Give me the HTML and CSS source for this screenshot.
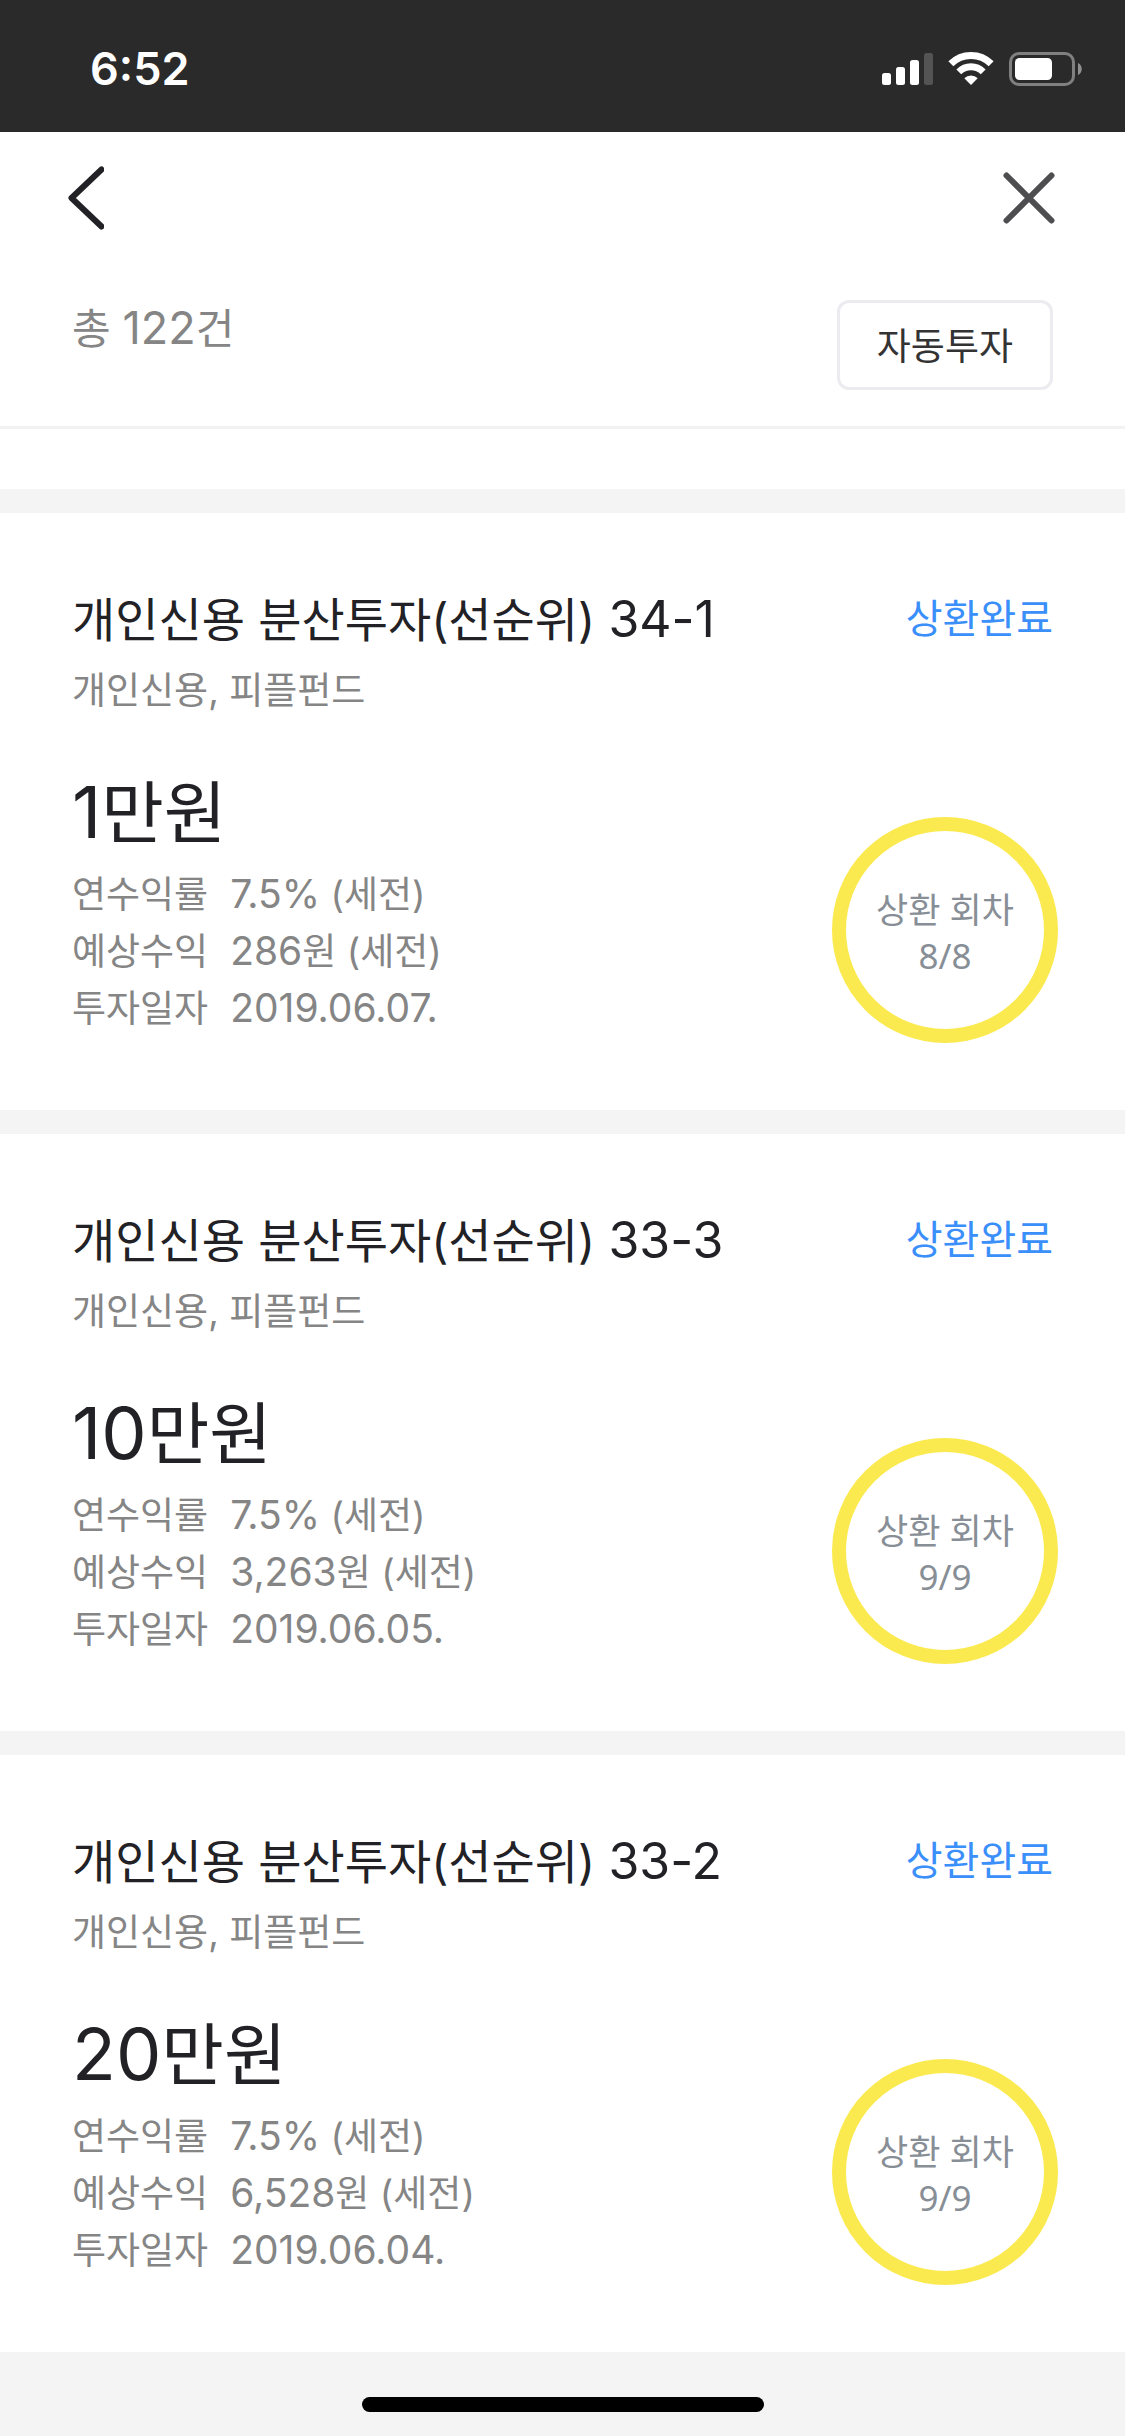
FILE: index.html
```html
<!DOCTYPE html>
<html lang="ko">
<head>
<meta charset="utf-8">
<meta name="viewport" content="width=device-width, initial-scale=1">
<title>투자 내역</title>
<link rel="stylesheet" href="styles.css">
</head>
<body>
<div class="status-bar">
  <span class="clock">6:52</span>
  <div class="indicators">
    <svg width="51" height="34" viewBox="0 0 51 34" aria-hidden="true">
      <g fill="#fff"><rect x="0" y="21" width="9" height="12" rx="2.5"/><rect x="14" y="15" width="9" height="18" rx="2.5"/><rect x="28" y="8" width="9" height="25" rx="2.5"/></g>
      <rect x="42" y="1" width="9" height="32" rx="2.5" fill="#545454"/>
    </svg>
    <svg width="46" height="34" viewBox="0 0 46 34" aria-hidden="true">
      <g fill="none" stroke="#fff"><path stroke-width="7" d="M2.85 11.85A28.5 28.5 0 0 1 43.15 11.85"/><path stroke-width="6.8" d="M10.8 19.8A17.3 17.3 0 0 1 35.2 19.8"/></g>
      <path fill="#fff" d="M16.3 26.3A9.5 9.5 0 0 1 29.7 26.3L23 33Z"/>
    </svg>
    <svg width="73" height="34" viewBox="0 0 73 34" aria-hidden="true">
      <rect x="1.5" y="1.5" width="63" height="31" rx="8.5" fill="none" stroke="#808080" stroke-width="3"/>
      <rect x="6" y="6" width="37" height="22" rx="4.5" fill="#fff"/>
      <path fill="#909090" d="M69 11C74 13 74 21 69 23Z"/>
    </svg>
  </div>
</div>

<nav class="nav">
  <button class="icon-button" type="button" aria-label="뒤로">
    <svg width="36" height="64" viewBox="0 0 36 64" fill="none" stroke="#222226" stroke-width="6" stroke-linecap="round" stroke-linejoin="round"><path d="M33.5 3.5L3.5 32L33.5 60.5"/></svg>
  </button>
  <button class="icon-button" type="button" aria-label="닫기">
    <svg width="52" height="52" viewBox="0 0 52 52" fill="none" stroke="#4e4e50" stroke-width="6" stroke-linecap="round"><path d="M3.5 3.5L48.5 48.5M48.5 3.5L3.5 48.5"/></svg>
  </button>
</nav>

<header class="toolbar">
  <p class="count">총 <span class="count-number">122</span>건</p>
  <button class="auto-button" type="button">자동투자</button>
</header>

<main class="list">
  <article class="card">
    <div class="card-head">
      <h2 class="title">개인신용 분산투자(선순위) <span class="title-number">34-1</span></h2>
      <span class="state">상환완료</span>
    </div>
    <p class="subtitle">개인신용, 피플펀드</p>
    <div class="card-body">
      <div>
        <p class="amount"><span class="amount-number">1</span>만원</p>
        <dl class="details">
          <dt>연수익률</dt><dd><span class="number">7.5%</span> (세전)</dd>
          <dt>예상수익</dt><dd><span class="number">286</span>원 (세전)</dd>
          <dt>투자일자</dt><dd><span class="number">2019.06.07.</span></dd>
        </dl>
      </div>
      <div class="ring"><span>상환 회차</span><span>8/8</span></div>
    </div>
  </article>

  <article class="card">
    <div class="card-head">
      <h2 class="title">개인신용 분산투자(선순위) <span class="title-number">33-3</span></h2>
      <span class="state">상환완료</span>
    </div>
    <p class="subtitle">개인신용, 피플펀드</p>
    <div class="card-body">
      <div>
        <p class="amount"><span class="amount-number">10</span>만원</p>
        <dl class="details">
          <dt>연수익률</dt><dd><span class="number">7.5%</span> (세전)</dd>
          <dt>예상수익</dt><dd><span class="number">3,263</span>원 (세전)</dd>
          <dt>투자일자</dt><dd><span class="number">2019.06.05.</span></dd>
        </dl>
      </div>
      <div class="ring"><span>상환 회차</span><span>9/9</span></div>
    </div>
  </article>

  <article class="card">
    <div class="card-head">
      <h2 class="title">개인신용 분산투자(선순위) <span class="title-number">33-2</span></h2>
      <span class="state">상환완료</span>
    </div>
    <p class="subtitle">개인신용, 피플펀드</p>
    <div class="card-body">
      <div>
        <p class="amount"><span class="amount-number">20</span>만원</p>
        <dl class="details">
          <dt>연수익률</dt><dd><span class="number">7.5%</span> (세전)</dd>
          <dt>예상수익</dt><dd><span class="number">6,528</span>원 (세전)</dd>
          <dt>투자일자</dt><dd><span class="number">2019.06.04.</span></dd>
        </dl>
      </div>
      <div class="ring"><span>상환 회차</span><span>9/9</span></div>
    </div>
  </article>
</main>

<footer class="home-area"><div class="home-bar"></div></footer>
</body>
</html>
```
FILE: styles.css
```css
* { box-sizing: border-box; }

body {
  margin: 0;
  background: #f4f4f4;
  color: #222226;
  font-family: Inter, "Noto Sans CJK KR", sans-serif;
  font-size: 37px;
}

h2, p, dl, dd { margin: 0; font-weight: 400; }

button {
  padding: 0;
  border: 0;
  background: none;
  color: inherit;
  font: inherit;
}

.status-bar {
  display: flex;
  align-items: center;
  justify-content: space-between;
  height: 132px;
  padding: 6px 43px 0 90px;
  background: #2a2a2a;
  color: #fff;
}

.clock {
  font-size: 45px;
  font-weight: 600;
  line-height: 54px;
}

.indicators { display: flex; gap: 15px; }

.nav {
  display: flex;
  align-items: center;
  justify-content: space-between;
  height: 132px;
  padding: 0 70px 0 68px;
  background: #fff;
}

.icon-button { display: flex; }

.toolbar {
  display: flex;
  align-items: flex-start;
  justify-content: space-between;
  padding: 36px 72px;
  border-bottom: 3px solid #f2f2f2;
  background: #fff;
}

.count {
  color: #858585;
  font-size: 42px;
  line-height: 57px;
}

.count-number,
.title-number,
.amount-number,
.number { line-height: 1; }

.count-number { font-size: 45px; }

.auto-button {
  height: 90px;
  padding: 0 37px 3px;
  border: 3px solid #ebebf0;
  border-radius: 12px;
  color: #333;
}

.list {
  padding-top: 60px;
  background: #fff;
}

.card {
  padding: 77px 67px 67px 72px;
  border-top: 24px solid #f4f4f4;
}

.card-head {
  display: flex;
  align-items: flex-start;
  justify-content: space-between;
  padding-right: 5px;
}

.title {
  font-size: 47px;
  line-height: 60px;
}

.title-number { font-size: 50px; }

.state {
  color: #3b8ffb;
  font-size: 40px;
  line-height: 57px;
}

.subtitle {
  margin-top: 17px;
  color: #858585;
  line-height: 48px;
}

.card-body {
  display: flex;
  align-items: flex-end;
  justify-content: space-between;
  margin-top: 56px;
}

.amount {
  font-size: 68px;
  line-height: 84px;
}

.amount-number { font-size: 72px; }

.details {
  display: grid;
  grid-template-columns: max-content 1fr;
  column-gap: 22px;
  margin: 11px 0 6px;
  color: #858585;
  line-height: 57px;
}

.number { font-size: 39px; }

.ring {
  display: flex;
  flex-direction: column;
  align-items: center;
  justify-content: center;
  width: 226px;
  height: 226px;
  padding-top: 5px;
  border: 14px solid #fbea4f;
  border-radius: 50%;
  color: #878e96;
  font-family: "Noto Sans", "Noto Sans CJK KR", sans-serif;
  font-size: 35px;
  line-height: 46px;
}

.home-area {
  padding: 45px 0 24px;
}

.home-bar {
  width: 402px;
  height: 15px;
  margin: 0 auto;
  border-radius: 8px;
  background: #000;
}
```
